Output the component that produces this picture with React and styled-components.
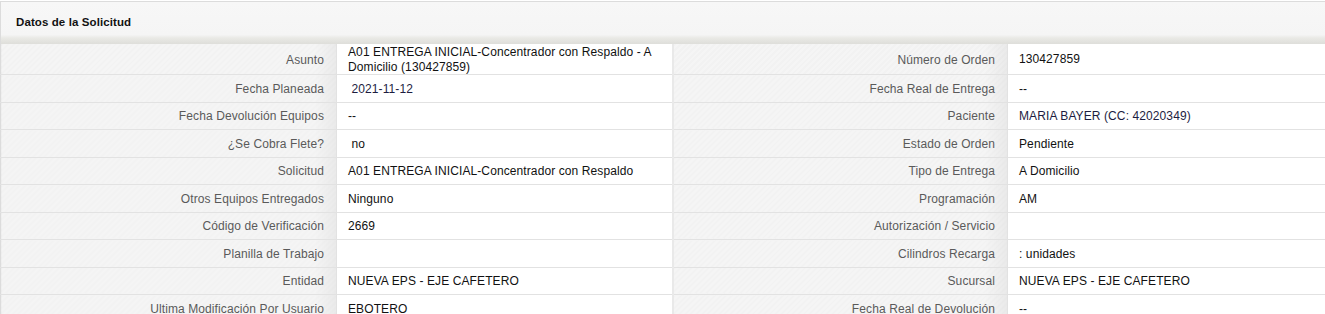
import React from "react";
import styled, { createGlobalStyle } from "styled-components";

const GlobalStyle = createGlobalStyle`
    body {
        margin: 0;
        background: #fff;
        font-family: "Liberation Sans", Arial, sans-serif;
    }
`;

const Panel = styled.section`
    padding-top: 1px;
`;

const Header = styled.header`
    height: 43px;
    box-sizing: border-box;
    display: flex;
    align-items: center;
    padding: 0 0 2px 15px;
    border-top: 1px solid #dcdcdc;
    border-left: 1px solid #dcdcdc;
    background: linear-gradient(to bottom, #f7f7f7 0, #f5f5f5 78%, #e9e9e5 86%, #dededa 100%);
    font-size: 11.5px;
    font-weight: bold;
    color: #111;
    letter-spacing: 0.1px;
`;

const Table = styled.table`
    width: 1325px;
    table-layout: fixed;
    border-collapse: collapse;
    font-size: 12px;
    letter-spacing: 0.1px;
`;

const Label = styled.td`
    height: 25.5px;
    padding: 1px 12px 0 8px;
    text-align: right;
    color: #5a5a5a;
    border-bottom: 1px solid #e2e2e2;
    border-left: ${p => (p.first ? "1px solid #dcdcdc" : "2px solid #e9e9e9")};
    background:
        linear-gradient(to right, rgba(255,255,255,0) calc(100% - 22px), rgba(0,0,0,0.045) 100%),
        repeating-linear-gradient(135deg, rgba(0,0,0,0.012) 0 2px, rgba(0,0,0,0) 2px 4px),
        #f5f5f5;
    white-space: nowrap;
`;

const Value = styled.td`
    padding: 1px 10px 0 11px;
    color: ${p => (p.tone === "navy" ? "#1d1d3f" : "#111")};
    line-height: 14.5px;
    border-bottom: 1px solid #e2e2e2;
    border-left: 1px solid #e2e2e2;
    background: #fff;
`;

const rows = [
    ["Asunto", "A01 ENTREGA INICIAL-Concentrador con Respaldo - A Domicilio (130427859)", "", "Número de Orden", "130427859", ""],
    ["Fecha Planeada", "\u00a02021-11-12", "navy", "Fecha Real de Entrega", "--", ""],
    ["Fecha Devolución Equipos", "--", "", "Paciente", "MARIA BAYER (CC: 42020349)", "navy"],
    ["¿Se Cobra Flete?", "\u00a0no", "", "Estado de Orden", "Pendiente", ""],
    ["Solicitud", "A01 ENTREGA INICIAL-Concentrador con Respaldo", "", "Tipo de Entrega", "A Domicilio", ""],
    ["Otros Equipos Entregados", "Ninguno", "", "Programación", "AM", ""],
    ["Código de Verificación", "2669", "", "Autorización / Servicio", "", ""],
    ["Planilla de Trabajo", "", "", "Cilindros Recarga", ": unidades", ""],
    ["Entidad", "NUEVA EPS - EJE CAFETERO", "", "Sucursal", "NUEVA EPS - EJE CAFETERO", ""],
    ["Ultima Modificación Por Usuario", "EBOTERO", "", "Fecha Real de Devolución", "--", ""],
];

export default function App() {
    return (
        <Panel>
            <GlobalStyle />
            <Header>Datos de la Solicitud</Header>
            <Table>
                <colgroup>
                    <col style={{ width: 336 }} />
                    <col style={{ width: 336 }} />
                    <col style={{ width: 335 }} />
                    <col />
                </colgroup>
                <tbody>
                    {rows.map(([l1, v1, t1, l2, v2, t2]) => (
                        <tr key={l1}>
                            <Label first>{l1}</Label>
                            <Value tone={t1}>{v1}</Value>
                            <Label>{l2}</Label>
                            <Value tone={t2}>{v2}</Value>
                        </tr>
                    ))}
                </tbody>
            </Table>
        </Panel>
    );
}
